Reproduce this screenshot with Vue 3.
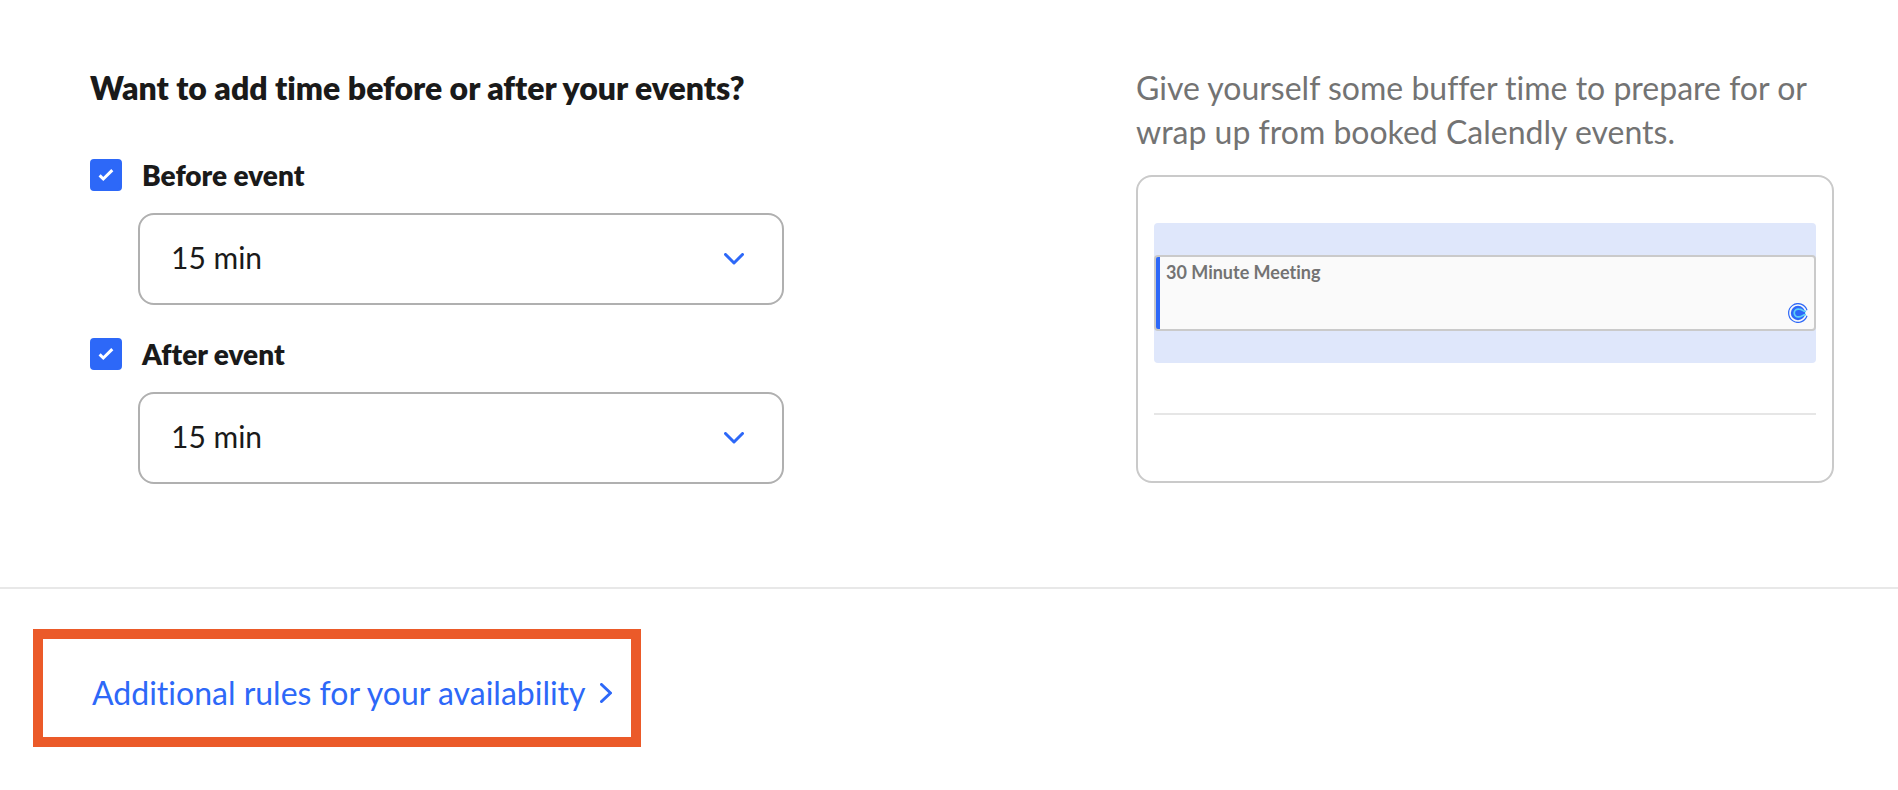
<script setup>
import { reactive } from 'vue'

const durations = ['0 min', '5 min', '10 min', '15 min', '30 min', '45 min', '1 hr']

const buffers = reactive([
  { id: 'before', label: 'Before event', enabled: true, duration: '15 min' },
  { id: 'after', label: 'After event', enabled: true, duration: '15 min' },
])
</script>

<template>
  <main class="page">
    <section class="buffers">
      <div class="settings">
        <h2 class="title">Want to add time before or after your events?</h2>
        <div v-for="b in buffers" :key="b.id" class="buffer">
          <label class="toggle">
            <span class="box">
              <input v-model="b.enabled" type="checkbox" class="check" />
              <svg v-show="b.enabled" class="tick" viewBox="0 0 32 32" aria-hidden="true">
                <path d="M9.6 16.4 13.3 20 22.3 11.1" />
              </svg>
            </span>
            <span>{{ b.label }}</span>
          </label>
          <div class="picker">
            <select v-model="b.duration" class="select" :aria-label="b.label">
              <option v-for="d in durations" :key="d">{{ d }}</option>
            </select>
            <svg class="chevron" viewBox="0 0 20 12" aria-hidden="true">
              <path d="M1.5 1.5 10 10 18.5 1.5" />
            </svg>
          </div>
        </div>
      </div>

      <aside class="help">
        <p class="hint">Give yourself some buffer time to prepare for or wrap up from booked Calendly events.</p>
        <div class="preview">
          <div class="slot">
            <div class="event">
              <span class="event-name">30 Minute Meeting</span>
              <svg class="logo" viewBox="0 0 20 20" aria-hidden="true">
                <path class="ring" d="M19 7.2A9.4 9.4 0 1 0 19 12.8" />
                <circle class="disc" cx="10" cy="10" r="7.2" />
                <path class="arc" d="M18 8.4C14.6 8.6 14.6 6.2 11 6.2A3.9 3.9 0 1 0 11 13.8C14.6 13.8 14.6 11.4 18 11.6" />
              </svg>
            </div>
          </div>
          <hr class="line" />
        </div>
      </aside>
    </section>

    <section class="more">
      <div class="highlight">
        <a href="#" class="link">
          <span>Additional rules for your availability</span>
          <svg class="arrow" viewBox="0 0 12 20" aria-hidden="true">
            <path d="M1.5 1.5 10.5 10 1.5 18.5" />
          </svg>
        </a>
      </div>
    </section>
  </main>
</template>

<style>
body {
  background: #fff;
}
</style>

<style scoped>
.page {
  font-family: Lato, "Liberation Sans", sans-serif;
  font-variant-ligatures: none;
  color: #1a1a1a;
}
.page * {
  box-sizing: border-box;
}
.buffers {
  display: grid;
  grid-template-columns: 694fr 698fr;
  gap: 352px;
  padding: 66px 64px 103px 90px;
  border-bottom: 2px solid #e8e8e8;
}
.title {
  margin: 0 0 49px;
  font-size: 32px;
  line-height: 44px;
  font-weight: 800;
  white-space: nowrap;
}
.buffer + .buffer {
  margin-top: 33px;
}
.toggle {
  display: flex;
  align-items: center;
  gap: 20px;
  font-size: 28px;
  line-height: 32px;
  font-weight: 800;
}
.box {
  display: grid;
  width: 32px;
  height: 32px;
}
.check,
.tick {
  grid-area: 1 / 1;
  width: 32px;
  height: 32px;
  margin: 0;
}
.check {
  appearance: none;
  border: 2px solid #2d68f8;
  border-radius: 4px;
  background: #fff;
}
.check:checked {
  background: #2d68f8;
}
.tick {
  fill: none;
  stroke: #fff;
  stroke-width: 3;
  pointer-events: none;
}
.picker {
  display: grid;
  align-items: center;
  margin: 22px 0 0 48px;
}
.select {
  grid-area: 1 / 1;
  appearance: none;
  width: 100%;
  height: 92px;
  padding: 0 80px 4px 31px;
  border: 2px solid #b0b0b0;
  border-radius: 16px;
  background: #fff;
  color: #1a1a1a;
  font-family: inherit;
  font-size: 30px;
}
.chevron {
  grid-area: 1 / 1;
  justify-self: end;
  width: 20px;
  height: 12px;
  margin-right: 40px;
  pointer-events: none;
}
.chevron,
.arrow {
  fill: none;
  stroke: #2d68f8;
  stroke-width: 3;
  stroke-linecap: round;
  stroke-linejoin: round;
}
.hint {
  margin: 0 0 21px;
  color: #737373;
  font-size: 32px;
  line-height: 44px;
}
.preview {
  height: 308px;
  padding: 46px 16px;
  border: 2px solid #cacaca;
  border-radius: 16px;
}
.slot {
  padding: 32px 0;
  border-radius: 4px;
  background: #dfe7fb;
}
.event {
  display: flex;
  justify-content: space-between;
  height: 76px;
  padding: 3px 6px 6px 10px;
  border: 2px solid #cacaca;
  border-radius: 4px;
  background: linear-gradient(to right, #2d68f8 4px, #fafafa 4px);
}
.event-name {
  color: #737373;
  font-size: 18px;
  line-height: 24px;
  font-weight: 700;
}
.logo {
  align-self: flex-end;
  width: 20px;
  height: 20px;
}
.ring {
  fill: none;
  stroke: #2d68f8;
  stroke-width: 1.2;
}
.disc {
  fill: #2d68f8;
}
.arc {
  fill: none;
  stroke: #5fd0f5;
  stroke-width: 1.7;
}
.line {
  height: 2px;
  margin: 50px 0 0;
  border: 0;
  background: #e6e6e6;
}
.more {
  padding: 40px 33px;
}
.highlight {
  display: flex;
  align-items: center;
  width: fit-content;
  height: 118px;
  padding: 10px 19px 0 49px;
  border: 10px solid #eb5a29;
}
.link {
  display: flex;
  align-items: center;
  gap: 14px;
  color: #2d68f8;
  font-size: 32px;
  line-height: 44px;
  text-decoration: none;
}
.arrow {
  width: 12px;
  height: 20px;
}
</style>
